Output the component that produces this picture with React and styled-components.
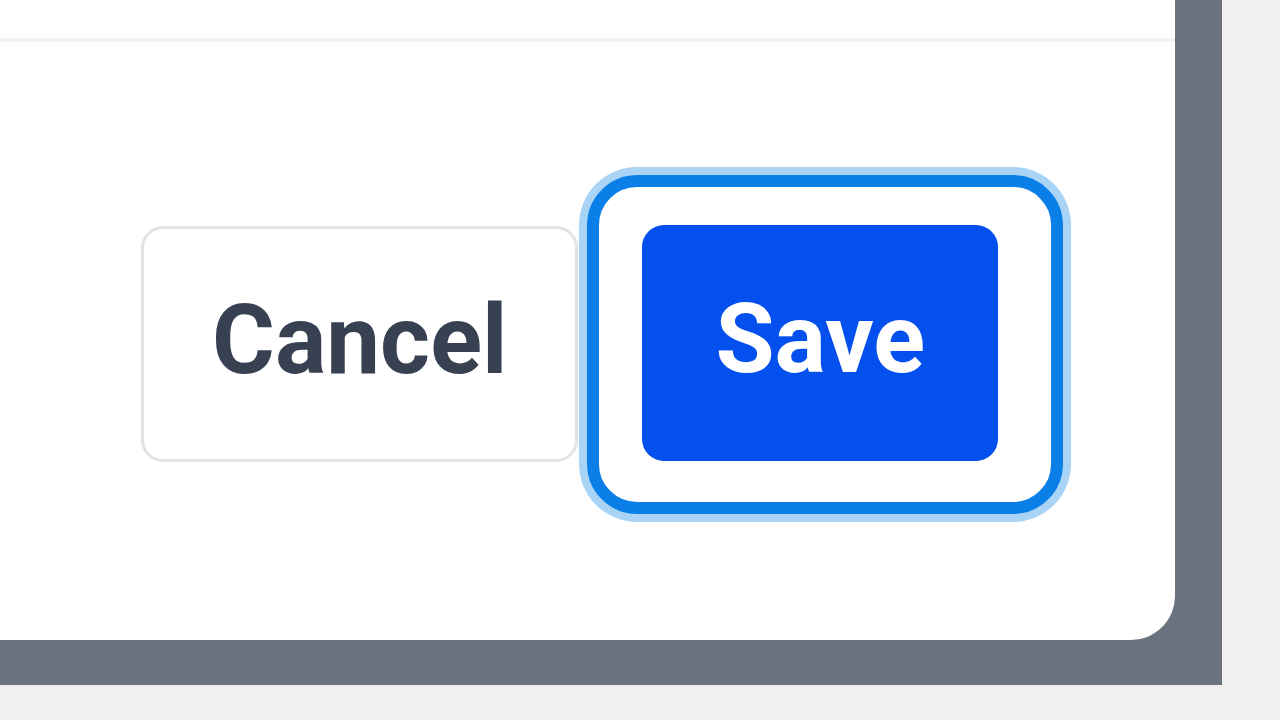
import React from "react";
import styled, { createGlobalStyle } from "styled-components";

const GlobalStyle = createGlobalStyle`
  html, body {
    margin: 0;
    padding: 0;
    background: #f0f0f1;
    overflow: hidden;
  }
  * { box-sizing: border-box; }
`;

const Page = styled.div`
  width: 1280px;
  height: 720px;
  background: #f0f0f1;
`;

const Backdrop = styled.div`
  width: 1222px;
  height: 685px;
  padding: 0 47px 45px 0;
  background: #6b7280;
`;

const Card = styled.div`
  width: 100%;
  height: 100%;
  background: #ffffff;
  border-bottom-right-radius: 44px;
  display: flex;
  flex-direction: column;
  overflow: hidden;
`;

const Body = styled.div`
  height: 38px;
  flex: none;
`;

const Footer = styled.div`
  flex: 1;
  border-top: 4px solid #f1f1f1;
  display: flex;
  align-items: center;
  justify-content: flex-end;
  gap: 9px;
  padding: 6px 112px 0 0;
`;

const Button = styled.button`
  height: 236px;
  padding: 0 ${(p) => (p.$primary ? "73px" : "68px")} 8px;
  border-radius: 22px;
  border: ${(p) => (p.$primary ? "none" : "3px solid #e3e3e5")};
  background: ${(p) => (p.$primary ? "#0450ee" : "#ffffff")};
  color: ${(p) => (p.$primary ? "#ffffff" : "#374151")};
  font-family: Roboto, "Liberation Sans", sans-serif;
  font-weight: 700;
  font-size: 96px;
  line-height: 1;
  display: flex;
  align-items: center;
  justify-content: center;
  cursor: pointer;
`;

const FocusRing = styled.div`
  border: 12px solid #0a7fe8;
  border-radius: 50px;
  box-shadow: 0 0 0 8px #a9d4f6;
  padding: 38px 53px 41px 43px;
  display: flex;
`;

export default function App() {
  return (
    <Page>
      <GlobalStyle />
      <Backdrop>
        <Card>
          <Body />
          <Footer>
            <Button>Cancel</Button>
            <FocusRing>
              <Button $primary>Save</Button>
            </FocusRing>
          </Footer>
        </Card>
      </Backdrop>
    </Page>
  );
}
